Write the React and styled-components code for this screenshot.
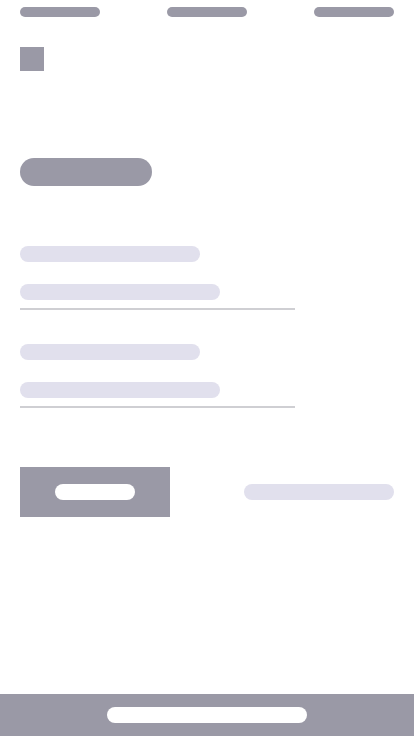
import React from "react";
import styled, { createGlobalStyle } from "styled-components";

const Global = createGlobalStyle`
  html, body { margin: 0; padding: 0; background: #ffffff; }
  body { font-family: "Liberation Sans", Arial, sans-serif; }
`;

const DARK = "#9a99a6";
const LIGHT = "#e1e0ed";

const Page = styled.div`
  width: 414px;
  height: 736px;
  display: flex;
  flex-direction: column;
  box-sizing: border-box;
`;

const Main = styled.div`
  display: flex;
  flex-direction: column;
  padding: 7px 20px 0;
`;

const Nav = styled.nav`
  display: flex;
  justify-content: space-between;
`;

const NavItem = styled.div`
  width: 80px;
  height: 10px;
  border-radius: 5px;
  background: ${DARK};
`;

const Logo = styled.div`
  width: 24px;
  height: 24px;
  background: ${DARK};
  margin-top: 30px;
`;

const Title = styled.div`
  width: 132px;
  height: 28px;
  border-radius: 14px;
  background: ${DARK};
  margin-top: 87px;
`;

const Form = styled.div`
  display: flex;
  flex-direction: column;
  gap: 34px;
  margin-top: 60px;
`;

const Field = styled.div`
  display: flex;
  flex-direction: column;
`;

const Bar = styled.div`
  width: ${(p) => p.$w}px;
  height: 16px;
  border-radius: 8px;
  background: ${(p) => p.$color || LIGHT};
`;

const Input = styled.div`
  width: 275px;
  margin-top: 22px;
  padding-bottom: 8px;
  border-bottom: 2px solid #cfcfd3;
`;

const Actions = styled.div`
  display: flex;
  justify-content: space-between;
  align-items: center;
  margin-top: 59px;
`;

const Button = styled.div`
  width: 150px;
  height: 50px;
  background: ${DARK};
  display: flex;
  align-items: center;
  justify-content: center;
`;

const Footer = styled.footer`
  margin-top: auto;
  height: 42px;
  background: ${DARK};
  display: flex;
  align-items: center;
  justify-content: center;
`;

export default function App() {
  return (
    <>
      <Global />
      <Page>
        <Main>
          <Nav>
            <NavItem />
            <NavItem />
            <NavItem />
          </Nav>
          <Logo />
          <Title />
          <Form>
            {[0, 1].map((i) => (
              <Field key={i}>
                <Bar $w={180} />
                <Input>
                  <Bar $w={200} />
                </Input>
              </Field>
            ))}
          </Form>
          <Actions>
            <Button>
              <Bar $w={80} $color="#ffffff" />
            </Button>
            <Bar $w={150} />
          </Actions>
        </Main>
        <Footer>
          <Bar $w={200} $color="#ffffff" />
        </Footer>
      </Page>
    </>
  );
}
